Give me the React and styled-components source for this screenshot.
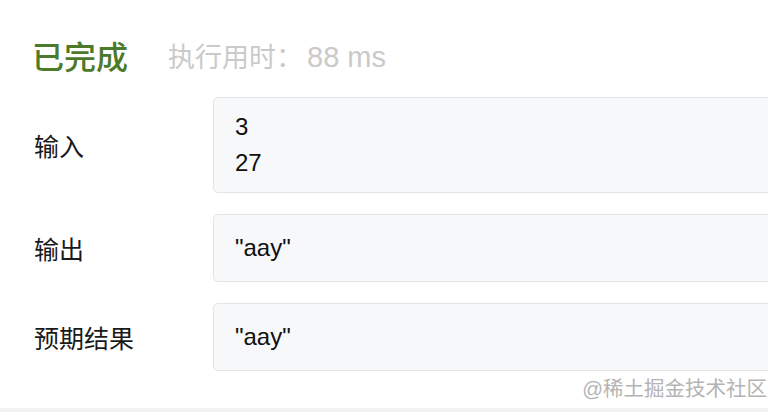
import React from 'react'
import styled, { createGlobalStyle } from 'styled-components'

const GlobalStyle = createGlobalStyle`
html, body {
    margin: 0;
    padding: 0;
    background: #fff;
    overflow: hidden;
}
body {
    font-family: "Liberation Sans", "Noto Sans CJK SC", sans-serif;
    color: #1a1a1a;
}
`

const Page = styled.div`
width: 768px;
height: 412px;
box-sizing: border-box;
padding: 34px 0 0 34px;
display: flex;
flex-direction: column;
position: relative;
overflow: hidden;
border-bottom: 4px solid #f1f3f3;
`

const Header = styled.div`
display: flex;
align-items: center;
gap: 40px;
height: 42px;
`

const Status = styled.span`
font-size: 32px;
font-weight: 500;
color: #4d7a2a;
margin-left: -2px;
`

const Runtime = styled.span`
font-size: 27px;
color: #cacaca;
display: flex;
align-items: baseline;
`

const Value = styled.span`
font-size: 29px;
margin-left: 4px;
`

const Rows = styled.div`
display: flex;
flex-direction: column;
gap: 21px;
margin-top: 21px;
`

const Row = styled.div`
display: grid;
grid-template-columns: 179px 700px;
align-items: center;
`

const Label = styled.div`
font-size: 25px;
color: #1a1a1a;
`

const Box = styled.div`
background: #f7f8fa;
border: 1px solid #e3e4e6;
border-radius: 5px;
padding: ${p => (p.$multi ? '11px 21px' : '15px 21px')};
font-size: 24px;
line-height: 36px;
color: #111;
`

const Line = styled.div``

const Watermark = styled.div`
align-self: flex-end;
margin-top: 1px;
margin-right: 1px;
font-size: 20.5px;
color: #b4b4b4;
`

const rows = [
    { label: '输入', lines: ['3', '27'] },
    { label: '输出', lines: ['"aay"'] },
    { label: '预期结果', lines: ['"aay"'] },
]

const App = () => {
    return (
        <>
            <GlobalStyle />
            <Page>
                <Header>
                    <Status>已完成</Status>
                    <Runtime>执行用时：<Value>88 ms</Value></Runtime>
                </Header>
                <Rows>
                    {rows.map(r => (
                        <Row key={r.label}>
                            <Label>{r.label}</Label>
                            <Box $multi={r.lines.length > 1}>
                                {r.lines.map((l, i) => <Line key={i}>{l}</Line>)}
                            </Box>
                        </Row>
                    ))}
                </Rows>
                <Watermark>@稀土掘金技术社区</Watermark>
            </Page>
        </>
    )
}

export default App
